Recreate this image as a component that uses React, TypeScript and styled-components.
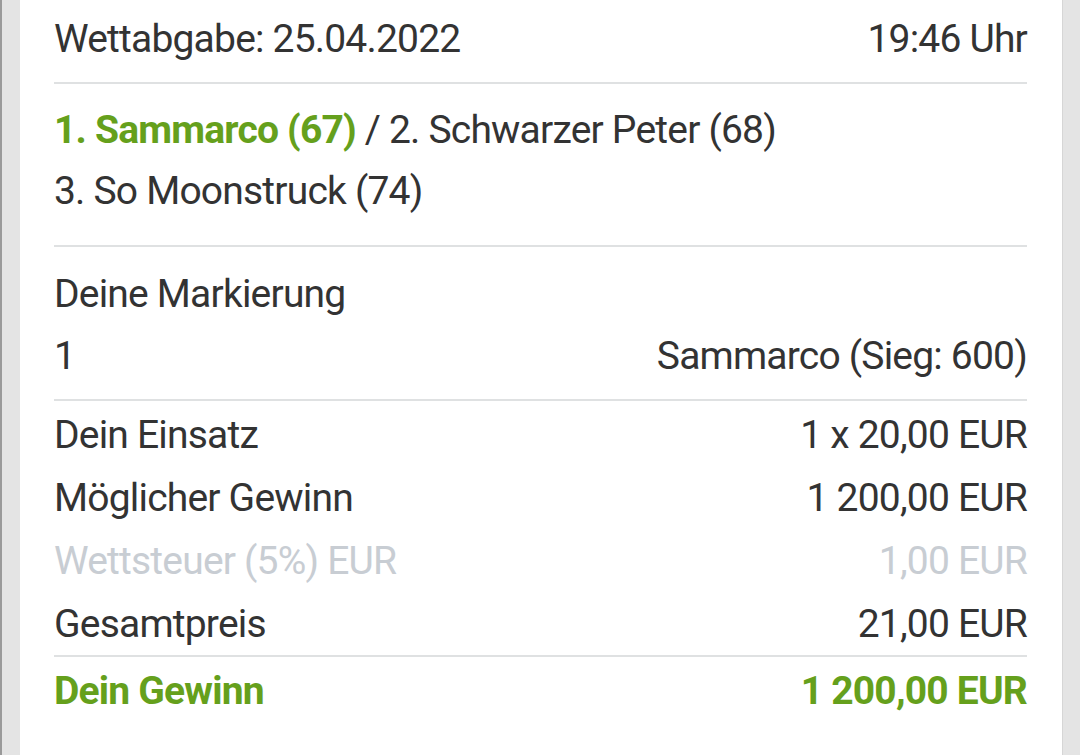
import React from "react";
import styled, { createGlobalStyle } from "styled-components";

const COLORS = {
  text: "#333333",
  green: "#65a01c",
  muted: "#c8cdd3",
  line: "#dfe1e2",
  frame: "#e4e4e4",
};

const GlobalStyle = createGlobalStyle`
  html, body {
    margin: 0;
    padding: 0;
    background: ${COLORS.frame};
  }
  body {
    font-family: Roboto, "Liberation Sans", sans-serif;
    color: ${COLORS.text};
  }
`;

const Page = styled.div`
  height: 755px;
  overflow: hidden;
  padding: 0 17px 0 18px;
  border-left: 2px solid #9a9a9a;
  box-sizing: border-box;
  background: ${COLORS.frame};
`;

const Card = styled.div`
  background: #ffffff;
  height: 100%;
  padding: 0 35px 0 34px;
  border-right: 1px solid #d6d6d6;
`;

const Section = styled.div<{ $top?: number; $bottom?: number; $divider?: boolean }>`
  padding-top: ${(p) => p.$top ?? 0}px;
  padding-bottom: ${(p) => p.$bottom ?? 0}px;
  border-bottom: ${(p) => (p.$divider ? `2px solid ${COLORS.line}` : "none")};
`;

const Row = styled.div<{ $muted?: boolean; $green?: boolean; $height?: number }>`
  display: flex;
  justify-content: space-between;
  align-items: center;
  height: ${(p) => p.$height ?? 62}px;
  font-size: 39px;
  letter-spacing: -0.8px;
  font-weight: ${(p) => (p.$green ? 700 : 400)};
  color: ${(p) => (p.$green ? COLORS.green : p.$muted ? COLORS.muted : COLORS.text)};
  white-space: nowrap;
`;

const Winner = styled.span`
  color: ${COLORS.green};
  font-weight: 700;
`;

const App: React.FC = () => {
  return (
    <>
      <GlobalStyle />
      <Page>
        <Card>
          <Section $top={8} $bottom={12} $divider>
            <Row>
              <span>Wettabgabe: 25.04.2022</span>
              <span>19:46 Uhr</span>
            </Row>
          </Section>

          <Section $top={15} $bottom={24} $divider>
            <Row $height={61}>
              <span>
                <Winner>1. Sammarco (67)</Winner> / 2. Schwarzer Peter (68)
              </span>
            </Row>
            <Row $height={61}>
              <span>3. So Moonstruck (74)</span>
            </Row>
          </Section>

          <Section $top={16} $bottom={12} $divider>
            <Row>
              <span>Deine Markierung</span>
            </Row>
            <Row>
              <span>1</span>
              <span>Sammarco (Sieg: 600)</span>
            </Row>
          </Section>

          <Section $top={2} $divider>
            <Row $height={63}>
              <span>Dein Einsatz</span>
              <span>1 x 20,00 EUR</span>
            </Row>
            <Row $height={63}>
              <span>Möglicher Gewinn</span>
              <span>1 200,00 EUR</span>
            </Row>
            <Row $height={63} $muted>
              <span>Wettsteuer (5%) EUR</span>
              <span>1,00 EUR</span>
            </Row>
            <Row $height={63}>
              <span>Gesamtpreis</span>
              <span>21,00 EUR</span>
            </Row>
          </Section>

          <Section $top={2}>
            <Row $height={63} $green>
              <span>Dein Gewinn</span>
              <span>1 200,00 EUR</span>
            </Row>
          </Section>
        </Card>
      </Page>
    </>
  );
};

export default App;
